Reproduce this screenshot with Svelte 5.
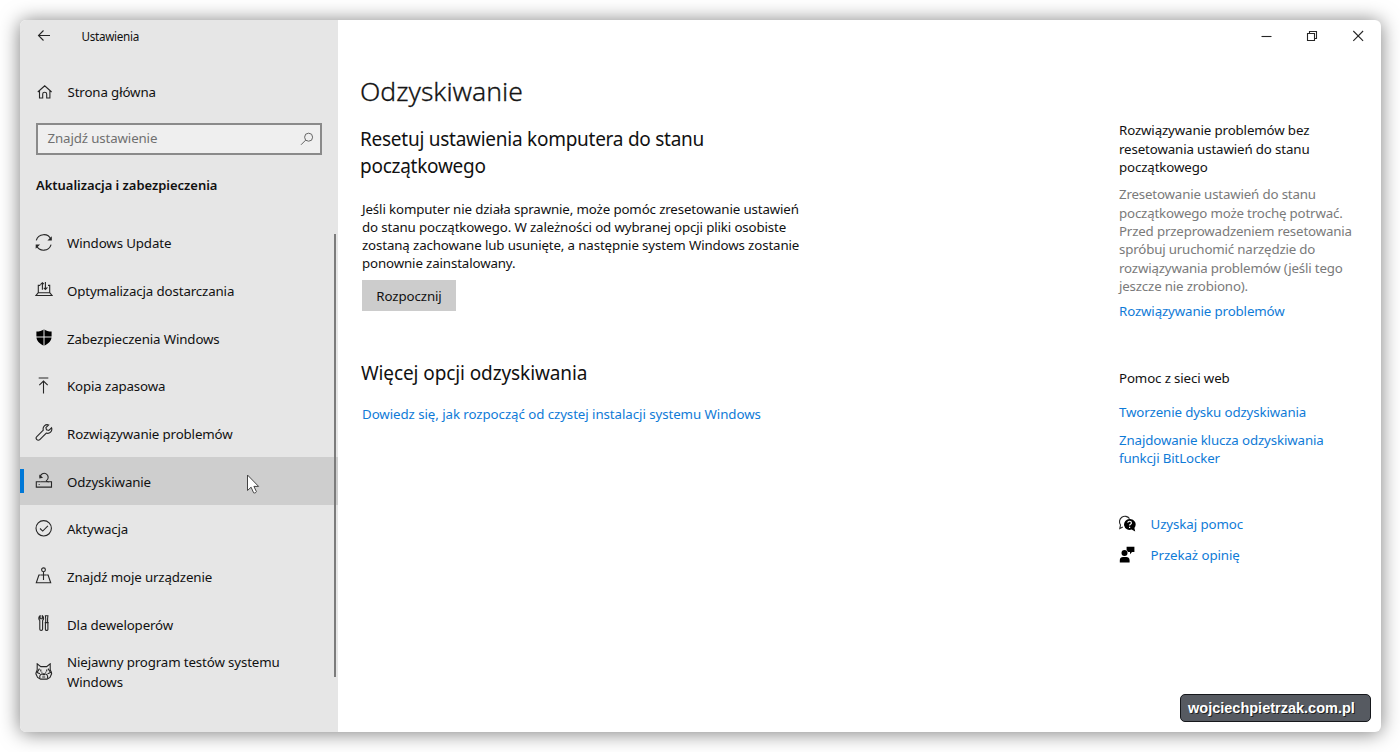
<script>
  const nav = [
    { id: 'update', label: 'Windows Update' },
    { id: 'delivery', label: 'Optymalizacja dostarczania' },
    { id: 'shield', label: 'Zabezpieczenia Windows' },
    { id: 'backup', label: 'Kopia zapasowa' },
    { id: 'wrench', label: 'Rozwiązywanie problemów' },
    { id: 'recovery', label: 'Odzyskiwanie', active: true },
    { id: 'activation', label: 'Aktywacja' },
    { id: 'find', label: 'Znajdź moje urządzenie' },
    { id: 'dev', label: 'Dla deweloperów' },
    { id: 'insider', label: 'Niejawny program testów systemu Windows' }
  ];
</script>

<div class="window">
  <aside>
    <div class="titlebar">
      <svg class="back" width="14" height="12" viewBox="0 0 14 12"><path d="M13 5.500H1.500M6.500 .5L1.500 5.500l5 5" /></svg>
      <span>Ustawienia</span>
    </div>
    <div class="home">
      <svg width="16" height="16" viewBox="0 0 16 16"><path d="M.8 8L7.700 1.800 14.600 8M2.500 6.700v7.300h3.200V10c0-2.400 4-2.400 4 0v4h3.200V6.700" /></svg>
      <span>Strona główna</span>
    </div>
    <div class="search">
      <span>Znajdź ustawienie</span>
      <svg width="14" height="14" viewBox="0 0 14 14"><circle cx="8.600" cy="5.200" r="4" /><path d="M5.700 8.100L1 12.800" /></svg>
    </div>
    <h3>Aktualizacja i zabezpieczenia</h3>
    <nav>
      {#each nav as item}
        <div class="item" class:active={item.active}>
          <svg width="18" height="18" viewBox="0 0 18 18">
            {#if item.id === 'update'}
              <path d="M1.300 6.300A7.800 7.800 0 0 1 16 5.500M16.100 10.700A7.800 7.800 0 0 1 1.500 11.500" />
              <path class="head" d="M16.800 2.200V6.600H12.400zM.7 14.800V10.400h4.400z" />
            {:else if item.id === 'delivery'}
              <path d="M5.300 4.400H3.300v7.300h11.400V4.400h-1.700M3.300 11.700L1 14.500h16l-2.300-2.800" />
              <path d="M7.400 8.800V1.700M5.400 3.700l2-2 1.500 1.500M10.400 1v7.300M8.800 6.800l1.600 1.600 2-2" />
            {:else if item.id === 'shield'}
              <path class="solid" d="M9 .3c2 1.500 4.700 2.300 7.600 2.300v5c0 4.200-3 7.200-7.600 9.200C4.400 14.800 1.400 11.800 1.400 7.600v-5C4.300 2.600 7 1.800 9 .3z" />
              <path class="cut" d="M9 0v17M1 8h16" />
            {:else if item.id === 'backup'}
              <path d="M3.700 1h9.600M8.500 16.400V4M4.300 8.200L8.500 4l4.200 4.200" />
            {:else if item.id === 'wrench'}
              <path d="M13.600 .9a4.200 4.200 0 0 0-5.300 5.200L1.800 12.600a2 2 0 0 0 3 3l6.500-6.500a4.200 4.200 0 0 0 5.300-5.300l-2.800 2.700-2.300-.6-.6-2.300z" />
            {:else if item.id === 'recovery'}
              <path d="M5.300 9.800H1.300v5.300h15.200V9.800h-3.800M3.700 12.500h.9" />
              <path d="M5.300 9.800h7.400L11.500 8.600A4 4 0 1 0 5.200 5" />
              <path class="head" d="M4.300 2.400v4l3.800-.6z" />
            {:else if item.id === 'activation'}
              <circle cx="8.700" cy="8.300" r="7.700" /><path d="M5 8.500l2.700 2.600 5.200-5.200" />
            {:else if item.id === 'find'}
              <circle cx="8.500" cy="2.800" r="1.900" /><path d="M8.500 4.700v8.200M5.500 8H3.900L1.300 15.800h14.400L13.100 8h-1.600M5.800 8h5.500" />
            {:else if item.id === 'dev'}
              <path d="M5.100 .6v3.200h2.200V.6c1.700 1.300 1.700 3.700.3 5v8.600c0 1.600-2.800 1.600-2.800 0V5.600c-1.400-1.300-1.400-3.700.3-5z" />
              <path d="M10.400 .8h2.500l-.3 3v3.700h-1.900V3.800zM9.700 7.600h4M10.400 7.600v6.800c0 1.300 2.500 1.300 2.500 0V7.600" />
            {:else}
              <path d="M2.200 6.600V.8L5.800 3.600h5.800L15.200 .8V6.600c.1 1 1.500 1.800 1.400 4.200l-1.600 3.600-3 1.700H5.600l-3-1.700L.9 10.800C.9 8.600 2.200 7.600 2.200 6.600z" />
              <path d="M4.500 5.600L2 9.500l3 1.300M13 5.600l2.600 3.900-3 1.300M5.800 6.400v2.200M11.700 6.400v2.200M6.400 9.300h1M10.200 9.300h1M5 15c-1-2.700.8-4.300 3.700-4.300s4.700 1.600 3.700 4.300M7.500 11.800h2.500M7.200 14h3" />
            {/if}
          </svg>
          <span>{item.label}</span>
        </div>
      {/each}
    </nav>
    <div class="scrollbar"></div>
    <svg class="cursor" width="14" height="21" viewBox="0 0 14 21"><path d="M1.500 1v15.500l3.600-3.300 2.500 5.600c1 .5 2.600-.2 2.800-1.200l-2.500-5.200h4.700z" /></svg>
  </aside>

  <main>
    <h1>Odzyskiwanie</h1>
    <h2>Resetuj ustawienia komputera do stanu<br />początkowego</h2>
    <p class="body">Jeśli komputer nie działa sprawnie, może pomóc zresetowanie ustawień<br />do stanu początkowego. W zależności od wybranej opcji pliki osobiste<br />zostaną zachowane lub usunięte, a następnie system Windows zostanie<br />ponownie zainstalowany.</p>
    <button>Rozpocznij</button>
    <h2 class="more">Więcej opcji odzyskiwania</h2>
    <a class="learn">Dowiedz się, jak rozpocząć od czystej instalacji systemu Windows</a>
  </main>

  <section class="side">
    <div class="controls">
      <svg width="12" height="12" viewBox="0 0 12 12"><path d="M1.500 6.500h10" /></svg>
      <svg width="12" height="12" viewBox="0 0 12 12"><path d="M1.500 3.500h7v7h-7zM3.500 3.500v-2h7v7h-2" /></svg>
      <svg width="12" height="12" viewBox="0 0 12 12"><path d="M1.300 1l9.800 9.800M11.100 1L1.300 10.800" /></svg>
    </div>
    <p class="title">Rozwiązywanie problemów bez<br />resetowania ustawień do stanu<br />początkowego</p>
    <p class="gray">Zresetowanie ustawień do stanu<br />początkowego może trochę potrwać.<br />Przed przeprowadzeniem resetowania<br />spróbuj uruchomić narzędzie do<br />rozwiązywania problemów (jeśli tego<br />jeszcze nie zrobiono).</p>
    <a class="troubleshoot">Rozwiązywanie problemów</a>
    <p class="web">Pomoc z sieci web</p>
    <a class="disk">Tworzenie dysku odzyskiwania</a>
    <a class="key">Znajdowanie klucza odzyskiwania<br />funkcji BitLocker</a>
    <div class="action help">
      <svg width="18" height="18" viewBox="0 0 18 18">
        <path d="M4.800 12L1.800 13.500 2.500 10A5.300 5.300 0 1 1 11.500 3.600" />
        <path class="solid" d="M11.600 4a5.500 5.500 0 1 0 2 10.600l3.600 2-.8-3.700A5.500 5.500 0 0 0 11.600 4z" />
        <path class="q" d="M9.800 7.800c.2-2.100 3.600-2 3.600.1 0 1.400-1.800 1.400-1.800 2.700M11.600 11.800v1.200" />
      </svg>
      <a>Uzyskaj pomoc</a>
    </div>
    <div class="action feedback">
      <svg width="18" height="18" viewBox="0 0 18 18">
        <path class="solid" d="M8.600 .8H16.400v5.300h-2.400L12 8.300V6.100H9.900A3.600 3.600 0 0 0 8.600 4zM1.800 16.500v-2.300c0-2.200 1.500-3.300 3.200-3.300h3.400c1.700 0 3.200 1.100 3.200 3.300v2.300z" />
        <circle class="solid" cx="6.500" cy="7" r="3" />
      </svg>
      <a>Przekaż opinię</a>
    </div>
    <div class="badge">wojciechpietrzak.com.pl</div>
  </section>
</div>

<style>
  :global(body) {
    margin: 0;
    background: #fff;
    overflow: hidden;
  }
  :global(#app) {
    display: flow-root;
    height: 752px;
  }
  * {
    box-sizing: border-box;
  }
  .window {
    display: flex;
    width: 1361px;
    height: 712px;
    margin: 20px 0 0 20px;
    background: #fff;
    border-radius: 6px;
    box-shadow: 0 1px 20px rgba(0, 0, 0, 0.52);
    font: 13.3px/18.3px 'Noto Sans', 'Open Sans', sans-serif;
    letter-spacing: -0.13px;
    color: #111;
    white-space: nowrap;
  }
  svg {
    flex: none;
    fill: none;
    stroke: #262626;
    stroke-width: 1.1;
  }
  .solid {
    fill: #000;
    stroke: none;
  }
  .head {
    fill: #262626;
    stroke: none;
  }
  .cut {
    stroke: #e6e6e6;
    stroke-width: 1;
  }
  .q {
    stroke: #fff;
    stroke-width: 1.2;
  }
  h1,
  h2,
  h3,
  p {
    margin: 0;
    font-weight: 400;
  }
  a {
    display: block;
    color: #0f7bd7;
  }
  aside {
    position: relative;
    flex: none;
    width: 318px;
    background: #e6e6e6;
    border-radius: 6px 0 0 6px;
  }
  .titlebar {
    display: flex;
    align-items: center;
    gap: 31px;
    height: 32px;
    padding-left: 16.500px;
    font-size: 11.7px;
    letter-spacing: -0.3px;
  }
  .titlebar span {
    padding-top: 1px;
  }
  .home {
    display: flex;
    align-items: center;
    gap: 14.500px;
    height: 40px;
    margin-top: 20px;
    padding-left: 17px;
  }
  .search {
    display: flex;
    align-items: center;
    justify-content: space-between;
    width: 286px;
    height: 32px;
    margin: 11px 0 0 16px;
    padding: 0 6px 1px 9.500px;
    border: 2px solid #8a8a8a;
    background: #efefef;
    color: #707070;
  }
  .search svg {
    stroke: #666;
    stroke-width: 1;
  }
  h3 {
    margin: 21px 0 0 16px;
    font-size: 13px;
    font-weight: 600;
    letter-spacing: -0.03px;
  }
  nav {
    margin-top: 24.400px;
  }
  .item {
    display: flex;
    align-items: center;
    gap: 14px;
    height: 47.7px;
    padding-left: 15px;
    line-height: 20px;
  }
  .item span {
    width: 240px;
    padding-top: 1.400px;
    white-space: normal;
  }
  .active {
    position: relative;
    background: #cecece;
  }
  .active::before {
    content: '';
    position: absolute;
    left: 0;
    top: 12px;
    width: 4px;
    height: 24px;
    background: #0078d7;
  }
  .scrollbar {
    position: absolute;
    right: 2px;
    top: 214px;
    width: 2px;
    height: 443px;
    background: #7c7c7c;
  }
  .cursor {
    position: absolute;
    left: 226px;
    top: 454px;
    fill: #fff;
    stroke: #444;
    stroke-width: 1;
  }
  main {
    flex: 1;
    padding: 51px 0 0 24px;
  }
  h1 {
    margin-left: -2px;
    font-size: 26.5px;
    font-weight: 300;
    line-height: 40px;
    letter-spacing: 0;
    -webkit-text-stroke: 0.3px #222;
  }
  h2 {
    margin: 15px 0 0 -2px;
    font-size: 19px;
    line-height: 27px;
    letter-spacing: -0.26px;
  }
  .body {
    margin-top: 19.600px;
  }
  button {
    display: block;
    width: 94px;
    height: 31px;
    margin-top: 7.400px;
    padding: 0;
    border: 0;
    background: #ccc;
    font: inherit;
    letter-spacing: -0.1px;
    color: inherit;
  }
  .more {
    margin: 49px 0 0 -1px;
    letter-spacing: -0.1px;
  }
  .learn {
    margin-top: 18px;
    letter-spacing: -0.07px;
  }
  .side {
    flex: none;
    width: 262px;
    display: flex;
    flex-direction: column;
  }
  .controls {
    display: flex;
    gap: 34px;
    align-self: flex-end;
    height: 32px;
    align-items: center;
    padding-right: 17px;
  }
  .title {
    margin-top: 69px;
    line-height: 18.500px;
  }
  .gray {
    margin-top: 8.600px;
    line-height: 18.400px;
    color: #7a7a7a;
    letter-spacing: -0.17px;
  }
  .troubleshoot {
    margin-top: 6.400px;
  }
  .web {
    margin-top: 48.300px;
  }
  .disk {
    margin-top: 16.500px;
  }
  .key {
    margin-top: 9px;
  }
  .action {
    display: flex;
    align-items: center;
    gap: 14.500px;
    height: 31px;
    margin-left: -1px;
    letter-spacing: -0.08px;
  }
  .help {
    margin-top: 41.600px;
  }
  .badge {
    width: 191px;
    height: 28px;
    margin: auto 10px 10px auto;
    padding-left: 7px;
    border: 1px solid #16181c;
    border-radius: 5px;
    background: #565a61;
    color: #fff;
    font: bold 14.5px/26px 'Liberation Sans', Arial, sans-serif;
    letter-spacing: 0;
    text-shadow: 1px 1px 0 #222;
  }
</style>
